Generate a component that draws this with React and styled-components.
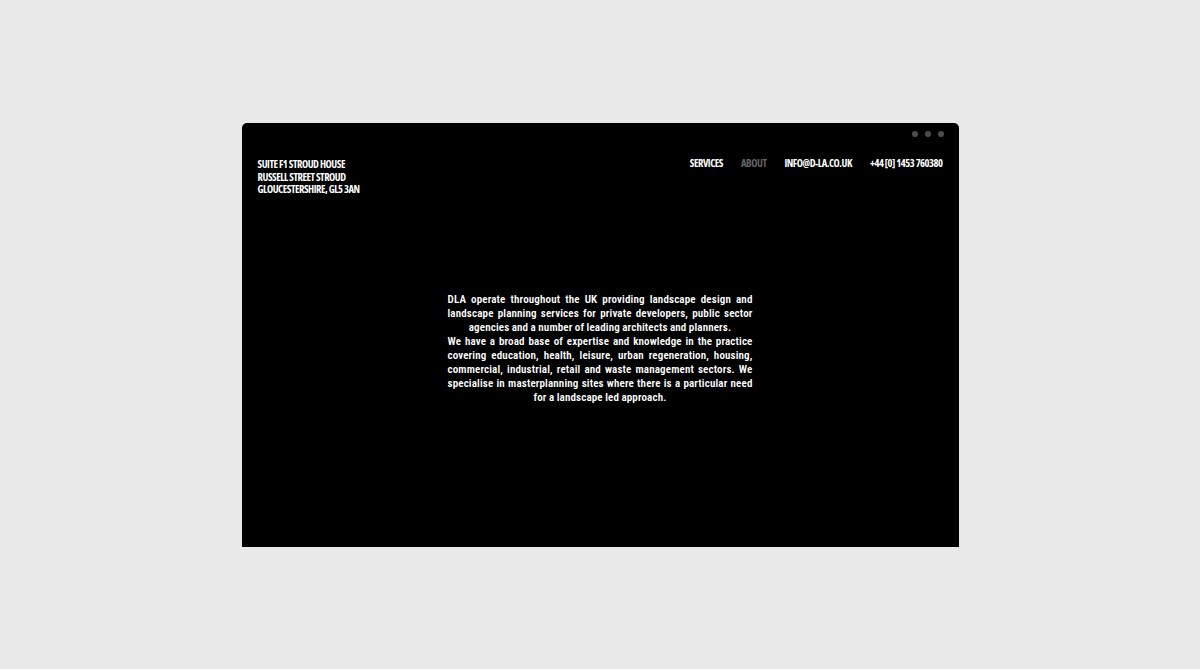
import styled, { createGlobalStyle } from "styled-components";

const GlobalStyle = createGlobalStyle`
  html, body {
    margin: 0;
    padding: 0;
    background: #e9e9e9;
  }
  body {
    font-family: Roboto, "Liberation Sans", sans-serif;
    -webkit-font-smoothing: antialiased;
  }
`;

const Stage = styled.div`
  width: 1200px;
  height: 669px;
  display: flex;
  justify-content: center;
  padding-top: 123px;
  box-sizing: border-box;
`;

const Window = styled.div`
  width: 717px;
  height: 424px;
  background: #000;
  border-radius: 5px 5px 0 0;
  display: flex;
  flex-direction: column;
  box-sizing: border-box;
  padding: 8px 16px 0 16px;
`;

const DotRow = styled.div`
  display: flex;
  justify-content: flex-end;
  gap: 7px;
  margin-right: -1px;
`;

const Dot = styled.span`
  width: 6px;
  height: 6px;
  border-radius: 50%;
  background: #4d4d4d;
`;

const Header = styled.header`
  display: flex;
  justify-content: space-between;
  align-items: flex-start;
  margin-top: 21px;
`;

const Caps = styled.div`
  color: #fff;
  font-family: "Open Sans", Roboto, sans-serif;
  font-size: 10.5px;
  font-weight: 700;
  font-stretch: 75%;
  line-height: 12.5px;
  letter-spacing: -0.45px;
  text-transform: uppercase;
  white-space: nowrap;
`;

const Nav = styled.nav`
  display: flex;
  gap: 18px;
  margin-top: -1px;
`;

const NavLink = styled(Caps).attrs({ as: "a" })`
  color: ${(p) => (p.$muted ? "#666" : "#fff")};
  text-decoration: none;
`;

const Body = styled.main`
  flex: 1;
  display: flex;
  justify-content: center;
  padding-top: 97px;
`;

const Intro = styled.p`
  margin: 0;
  width: 305px;
  color: #fff;
  font-size: 11px;
  font-weight: 600;
  font-stretch: 87%;
  line-height: 14px;
  letter-spacing: 0.15px;
  word-spacing: -0.3px;
  text-align: justify;
  text-align-last: center;
`;

export default function App() {
  return (
    <>
      <GlobalStyle />
      <Stage>
        <Window>
          <DotRow>
            <Dot />
            <Dot />
            <Dot />
          </DotRow>
          <Header>
            <Caps>
              Suite F1 Stroud House
              <br />
              Russell Street Stroud
              <br />
              Gloucestershire, GL5 3AN
            </Caps>
            <Nav>
              <NavLink href="#">Services</NavLink>
              <NavLink href="#" $muted>
                About
              </NavLink>
              <NavLink href="#">info@d-la.co.uk</NavLink>
              <NavLink href="#">+44 [0] 1453 760380</NavLink>
            </Nav>
          </Header>
          <Body>
            <Intro>
              DLA operate throughout the UK providing landscape design and
              landscape planning services for private developers, public sector
              agencies and a number of leading architects and planners.
              <br />
              We have a broad base of expertise and knowledge in the practice
              covering education, health, leisure, urban regeneration, housing,
              commercial, industrial, retail and waste management sectors. We
              specialise in masterplanning sites where there is a particular
              need for a landscape led approach.
            </Intro>
          </Body>
        </Window>
      </Stage>
    </>
  );
}
